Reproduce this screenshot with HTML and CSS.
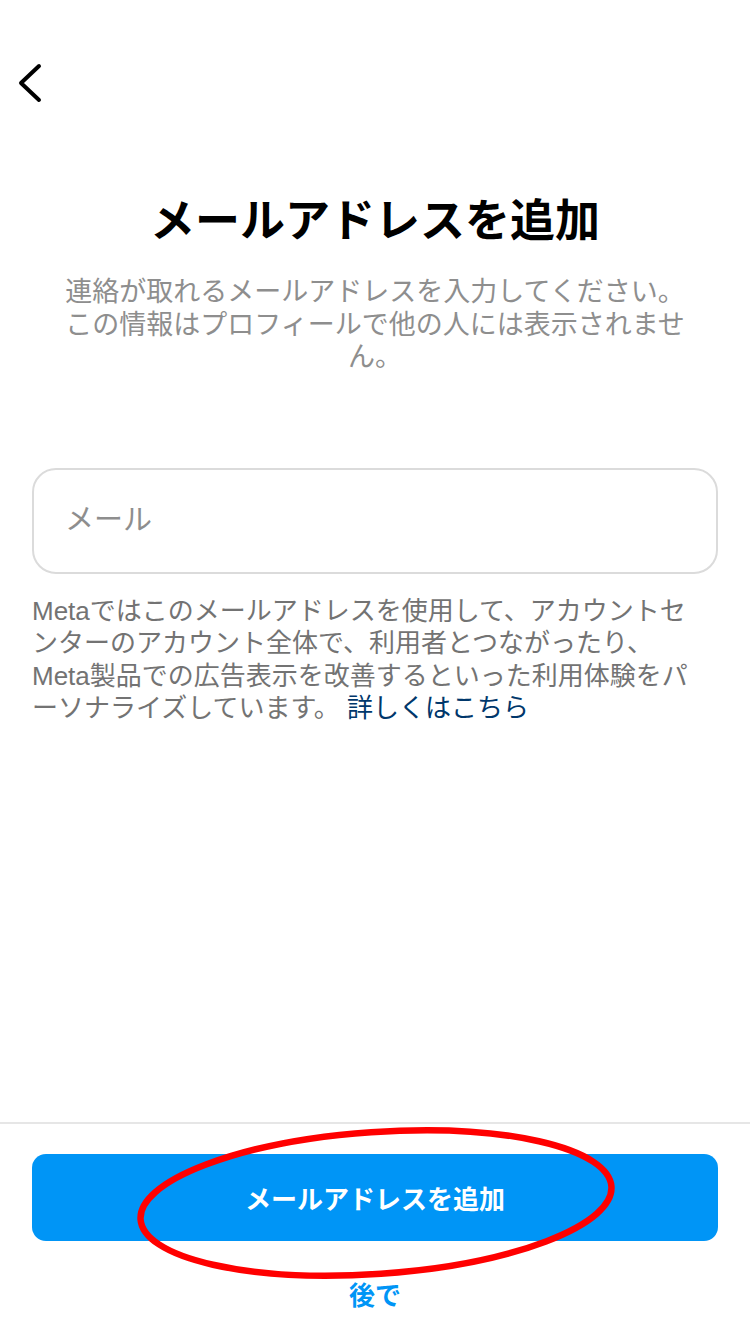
FILE: index.html
```html
<html>
<head>
  <meta charset="utf-8">
  <title>メールアドレスを追加</title>
  <link rel="stylesheet" href="styles.css">
</head>
<body>
  <div class="page">
    <div class="header">
      <svg class="back" width="30" height="44" viewBox="0 0 30 44">
        <polyline points="22,4 4,21 22,38" fill="none" stroke="#000" stroke-width="4" stroke-linecap="round" stroke-linejoin="round"/>
      </svg>
    </div>

    <div class="main">
      <h1 class="title">メールアドレスを追加</h1>
      <p class="subtitle">連絡が取れるメールアドレスを入力してください。この情報はプロフィールで他の人には表示されません。</p>

      <div class="field">
        <input type="text" class="email" placeholder="メール">
      </div>

      <p class="info">Metaではこのメールアドレスを使用して、アカウントセ<br>ンターのアカウント全体で、利用者とつながったり、<br>Meta製品での広告表示を改善するといった利用体験をパ<br>ーソナライズしています。 <a class="more" href="#">詳しくはこちら</a></p>
    </div>

    <div class="footer">
      <button class="primary">メールアドレスを追加</button>
      <a class="later" href="#">後で</a>
      <svg class="mark" width="750" height="212" viewBox="0 0 750 212">
        <ellipse cx="376" cy="79" rx="236" ry="71" transform="rotate(-4 376 79)" fill="none" stroke="#f00" stroke-width="6.5"/>
      </svg>
    </div>
  </div>
</body>
</html>
```

FILE: styles.css
```css
body {
  margin: 0;
  background: #fff;
  font-family: "Liberation Sans", "Noto Sans CJK JP", sans-serif;
  color: #000;
}

.page {
  display: flex;
  flex-direction: column;
  height: 1334px;
}

.header {
  padding: 62px 0 0 17px;
  height: 44px;
}

.back {
  display: block;
}

.main {
  flex: 1;
  padding: 0 32px;
}

.title {
  margin: 90px 0 0;
  font-size: 45px;
  line-height: 52px;
  font-weight: bold;
  text-align: center;
}

.subtitle {
  width: 632px;
  margin: 28px auto 0;
  font-size: 27px;
  line-height: 32.5px;
  color: #8e8e8e;
  text-align: center;
}

.field {
  margin-top: 94px;
}

.email {
  display: block;
  width: 100%;
  height: 106px;
  box-sizing: border-box;
  padding: 0 31px;
  border: 2px solid #dbdbdb;
  border-radius: 24px;
  font-family: "Liberation Sans", "Noto Sans CJK JP", sans-serif;
  font-size: 29px;
  color: #000;
  outline: none;
}

.email::placeholder {
  color: #8e8e8e;
}

.info {
  margin: 21px 0 0;
  font-size: 26px;
  line-height: 32.5px;
  color: #737373;
  white-space: nowrap;
}

.more {
  color: #00376b;
  text-decoration: none;
}

.footer {
  position: relative;
  border-top: 2px solid #e6e6e6;
  padding: 30px 32px 0;
  height: 180px;
}

.primary {
  display: block;
  width: 100%;
  height: 87px;
  border: none;
  border-radius: 14px;
  background: #0095f6;
  color: #fff;
  font-family: "Liberation Sans", "Noto Sans CJK JP", sans-serif;
  font-size: 26px;
  font-weight: bold;
}

.later {
  display: block;
  margin-top: 34px;
  text-align: center;
  font-size: 26px;
  font-weight: bold;
  color: #0095f6;
  text-decoration: none;
}

.mark {
  position: absolute;
  left: 0;
  top: 0;
  pointer-events: none;
}
```
